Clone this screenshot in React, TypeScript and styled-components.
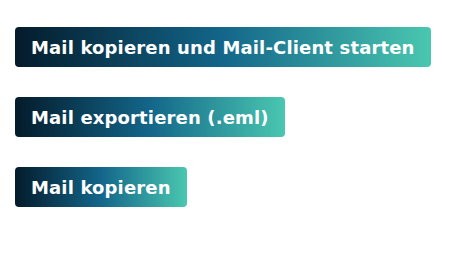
import React from "react";
import styled, { createGlobalStyle } from "styled-components";

const GlobalStyle = createGlobalStyle`
  html, body {
    margin: 0;
    padding: 0;
    background: #fff;
  }
`;

const Page = styled.div`
  display: flex;
  flex-direction: column;
  align-items: flex-start;
  gap: 30px;
  padding: 27px 15px;
`;

const ActionButton = styled.button`
  height: 40px;
  padding: 0 16px;
  border: none;
  border-radius: 4px;
  background: linear-gradient(90deg, #041b2b 0%, #13668a 50%, #4ac7b0 100%);
  color: #fff;
  font-family: "DejaVu Sans", sans-serif;
  font-weight: 700;
  font-size: 18px;
  letter-spacing: 0.15px;
  white-space: nowrap;
  cursor: pointer;
`;

const actions = [
  "Mail kopieren und Mail-Client starten",
  "Mail exportieren (.eml)",
  "Mail kopieren",
];

const App = () => {
  return (
    <>
      <GlobalStyle />
      <Page>
        {actions.map((label) => (
          <ActionButton key={label}>{label}</ActionButton>
        ))}
      </Page>
    </>
  );
};

export default App;
